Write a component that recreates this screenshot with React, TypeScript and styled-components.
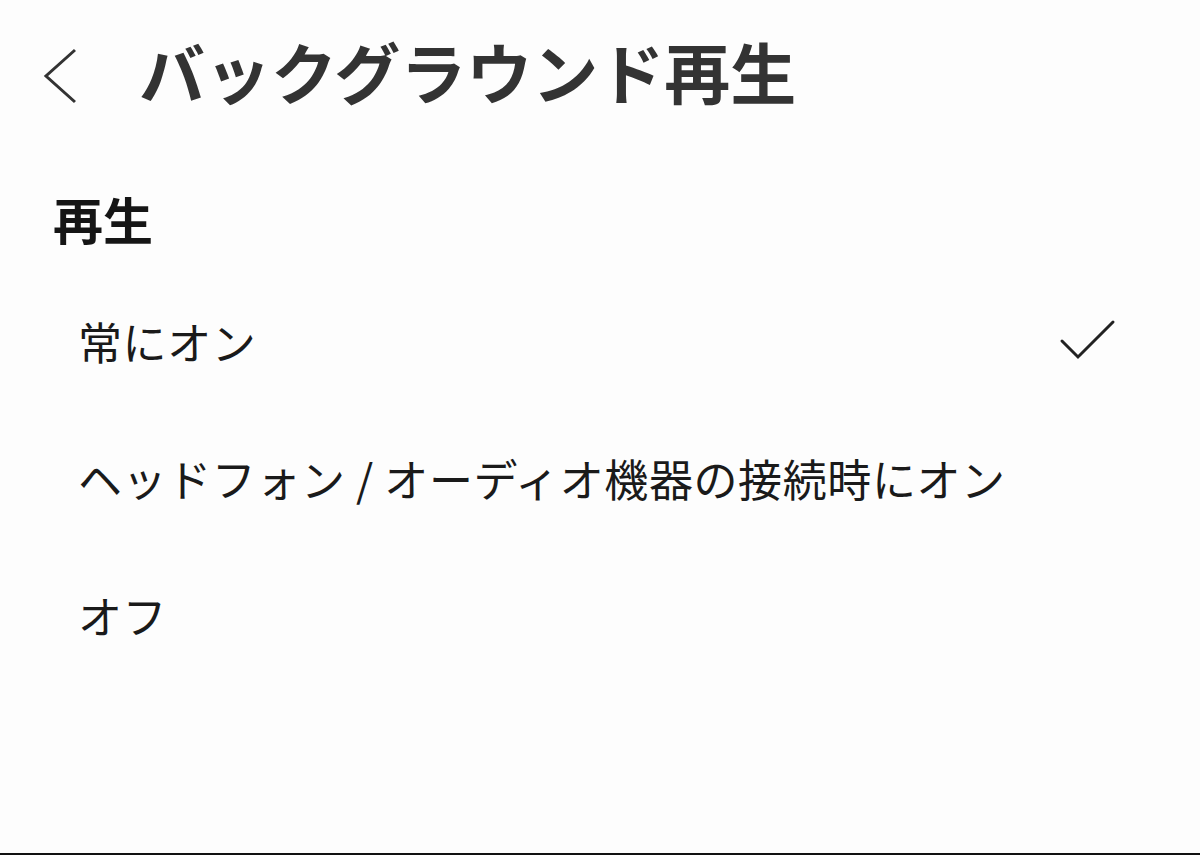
import styled, { createGlobalStyle } from "styled-components";

const GlobalStyle = createGlobalStyle`
  html, body {
    margin: 0;
    padding: 0;
    background: #fdfdfd;
  }
  body {
    font-family: "Noto Sans CJK JP", "Noto Sans", sans-serif;
  }
`;

const Screen = styled.div`
  box-sizing: border-box;
  width: 1200px;
  height: 855px;
  background: #fdfdfd;
  border-bottom: 2px solid #111;
  display: flex;
  flex-direction: column;
`;

const Header = styled.header`
  height: 140px;
  display: flex;
  align-items: center;
  padding-left: 40px;
  gap: 59px;
`;

const BackButton = styled.button`
  display: flex;
  align-items: center;
  justify-content: center;
  width: 40px;
  height: 60px;
  padding: 0;
  margin-top: 12px;
  border: none;
  background: none;
  color: #333;
  cursor: pointer;
`;

const Title = styled.h1`
  margin: 0;
  font-size: 66px;
  font-weight: 700;
  line-height: 1;
  color: #333;
`;

const SectionTitle = styled.h2`
  margin: 48px 0 24px;
  padding-left: 53px;
  font-size: 50px;
  font-weight: 700;
  line-height: 60px;
  color: #151515;
`;

const OptionList = styled.ul`
  list-style: none;
  margin: 0;
  padding: 0;
`;

const Option = styled.li`
  height: 137px;
  display: flex;
  align-items: center;
  justify-content: space-between;
  padding: 0 84px 0 78px;
  font-size: 44px;
  letter-spacing: 0.6px;
  color: #1a1a1a;
  cursor: pointer;
`;

const Check = () => (
  <svg width="58" height="46" viewBox="0 0 58 46" fill="none">
    <path
      d="M4 23 L20 39 L55 4"
      stroke="#222"
      strokeWidth="3"
      strokeLinecap="round"
      strokeLinejoin="miter"
    />
  </svg>
);

const options = [
  { label: "常にオン", selected: true },
  { label: "ヘッドフォン / オーディオ機器の接続時にオン", selected: false },
  { label: "オフ", selected: false },
];

export default function App() {
  return (
    <>
      <GlobalStyle />
      <Screen>
        <Header>
          <BackButton aria-label="戻る">
            <svg width="36" height="56" viewBox="0 0 36 56" fill="none">
              <path d="M33 2 L4 28 L33 54" stroke="#333" strokeWidth="3" />
            </svg>
          </BackButton>
          <Title>バックグラウンド再生</Title>
        </Header>
        <SectionTitle>再生</SectionTitle>
        <OptionList>
          {options.map((o) => (
            <Option key={o.label}>
              <span>{o.label}</span>
              {o.selected && <Check />}
            </Option>
          ))}
        </OptionList>
      </Screen>
    </>
  );
}
